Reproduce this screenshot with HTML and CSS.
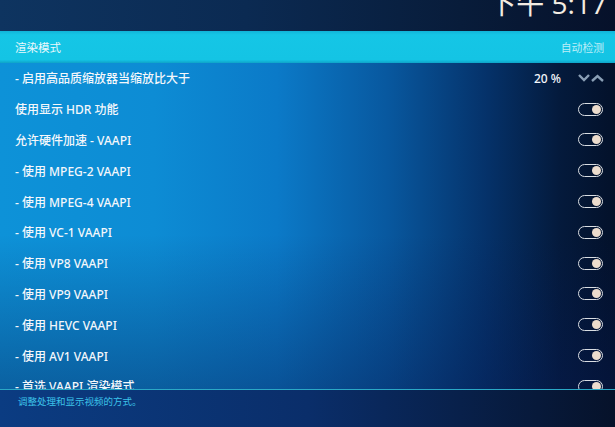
FILE: index.html
```html
<!DOCTYPE html>
<html lang="zh">
<head>
<meta charset="utf-8">
<link rel="stylesheet" href="styles.css">
</head>
<body>
<div class="screen">
  <header class="top">
    <div class="clock">下午 5:17</div>
  </header>
  <div class="focus">
    <span class="focus-label">渲染模式</span>
    <span class="focus-value">自动检测</span>
  </div>
  <div class="list">
    <div class="row"><span>- 启用高品质缩放器当缩放比大于</span><span class="spin"><span class="pct">20 %</span><span class="arrows"><svg width="26" height="10" viewBox="0 0 26 10"><path d="M1 2 L6 7 L11 2" fill="none" stroke="#8a9fb5" stroke-width="2.4"/><path d="M14 8 L19.5 3 L25 8" fill="none" stroke="#8a9fb5" stroke-width="2.4"/></svg></span></span></div>
    <div class="row"><span>使用显示 HDR 功能</span><span class="toggle"><span class="knob"></span></span></div>
    <div class="row"><span>允许硬件加速 - VAAPI</span><span class="toggle"><span class="knob"></span></span></div>
    <div class="row"><span>- 使用 MPEG-2 VAAPI</span><span class="toggle"><span class="knob"></span></span></div>
    <div class="row"><span>- 使用 MPEG-4 VAAPI</span><span class="toggle"><span class="knob"></span></span></div>
    <div class="row"><span>- 使用 VC-1 VAAPI</span><span class="toggle"><span class="knob"></span></span></div>
    <div class="row"><span>- 使用 VP8 VAAPI</span><span class="toggle"><span class="knob"></span></span></div>
    <div class="row"><span>- 使用 VP9 VAAPI</span><span class="toggle"><span class="knob"></span></span></div>
    <div class="row"><span>- 使用 HEVC VAAPI</span><span class="toggle"><span class="knob"></span></span></div>
    <div class="row"><span>- 使用 AV1 VAAPI</span><span class="toggle"><span class="knob"></span></span></div>
    <div class="row"><span>- 首选 VAAPI 渲染模式</span><span class="toggle"><span class="knob"></span></span></div>
  </div>
  <footer class="info">调整处理和显示视频的方式。</footer>
</div>
</body>
</html>
```
FILE: styles.css
```css
html, body {
  margin: 0;
  padding: 0;
}
body {
  width: 615px;
  height: 427px;
  overflow: hidden;
  font-family: "Noto Sans", "Noto Sans CJK SC", sans-serif;
  color: #f2f6fa;
}
.screen {
  width: 615px;
  height: 427px;
  display: flex;
  flex-direction: column;
  background:
    linear-gradient(to bottom, rgba(6, 24, 80, 0) 0%, rgba(6, 24, 80, 0) 55%, rgba(6, 24, 80, 0.5) 100%),
    linear-gradient(to right, #0d92d8 0%, #0d8cd4 25%, #0b7ac8 45%, #08589f 63%, #05326a 79%, #041a3c 91%, #03112a 100%);
  background-color: #0b4f9a;
}
.top {
  height: 31px;
  display: flex;
  justify-content: flex-end;
  overflow: hidden;
  background: linear-gradient(to right, #0e3460 0%, #0b2a52 40%, #081c3a 75%, #06112a 100%);
}
.clock {
  font-family: "Open Sans", "Noto Sans CJK SC", sans-serif;
  font-weight: 400;
  font-size: 28px;
  line-height: 28px;
  margin-top: -11px;
  margin-right: 8px;
  color: #f3ece2;
  white-space: nowrap;
}
.focus {
  height: 32px;
  padding: 0 11px 0 15px;
  display: flex;
  align-items: center;
  justify-content: space-between;
  background: linear-gradient(to bottom, #12b4d8 0%, #15c6e6 12%, #14c4e4 90%, #0fa3c8 100%);
}
.focus-label {
  color: #eaf9fc;
  font-size: 11.5px;
}
.focus-value {
  color: #bdeef8;
  font-size: 10.8px;
}
.list {
  height: 326px;
  overflow: hidden;
  padding-left: 15px;
  padding-right: 11px;
}
.row {
  height: 30.8px;
  display: flex;
  align-items: center;
  justify-content: space-between;
  font-family: "Noto Sans", "Noto Sans CJK SC", sans-serif;
  font-weight: 500;
  font-size: 12px;
  color: #f4f7fb;
}
.spin {
  display: flex;
  align-items: center;
  gap: 17px;
}
.arrows {
  display: flex;
  align-items: center;
}
.toggle {
  box-sizing: border-box;
  width: 25px;
  height: 13px;
  border: 1.6px solid #d9dde2;
  border-radius: 7px;
  display: flex;
  align-items: center;
  justify-content: flex-end;
  padding-right: 1px;
  margin-right: 1px;
}
.knob {
  width: 9px;
  height: 9px;
  border-radius: 50%;
  background: #ecdccd;
}
.info {
  flex: 1;
  border-top: 1.5px solid #2aa8c6;
  padding: 4px 0 0 18px;
  font-size: 9.5px;
  color: #3cc4ea;
  background: linear-gradient(to right, #0b3c82 0%, #0a2e6a 50%, #06122a 100%);
}
```
